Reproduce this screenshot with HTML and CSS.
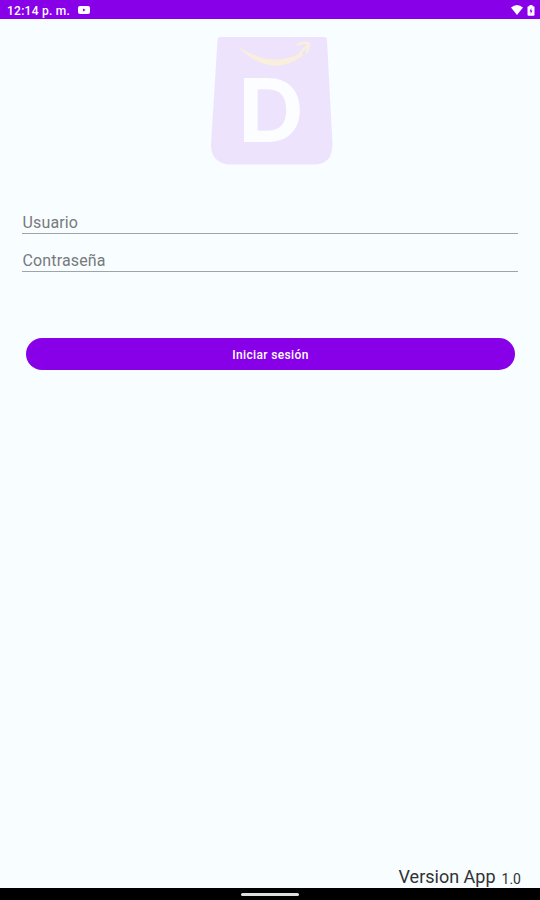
FILE: index.html
```html
<!DOCTYPE html>
<html lang="es">
	<head>
		<meta charset="utf-8">
		<title>Iniciar sesión</title>
		<link rel="stylesheet" href="styles.css">
	</head>
	<body>

		<div class="status-bar">
			<span class="time">12:14 p. m.</span>
			<svg class="video" width="12" height="8" viewBox="0 0 12 8">
				<rect width="12" height="8" rx="2" fill="#fff"/>
				<path d="M5 2.500v3l2.700-1.500z" fill="#8800e8"/>
			</svg>
			<svg class="wifi" width="12" height="10" viewBox="0 0 12 10">
				<path d="M0 2.6Q6-2.4 12 2.6L6 10z" fill="#fff"/>
			</svg>
			<svg class="battery" width="8" height="11" viewBox="0 0 8 11">
				<path d="M2.5 0h3v1.2h1Q7.5 1.2 7.5 2.2v7.6q0 1-1 1h-5q-1 0-1-1V2.2q0-1 1-1h1z" fill="#fff"/>
				<path d="M4.3 3L2.6 6.5h1.1V9l1.7-3.4H4.3z" fill="#8800e8"/>
			</svg>
		</div>

		<form class="login">
			<svg class="logo" width="124" height="130" viewBox="0 0 124 130">
				<path d="M10 1H114Q117 1 117 4L122.5 109Q122 128 105 128.500H18Q1 126 1 109L7.500 4Q7.500 1 10 1z" fill="#ede3fd"/>
				<path d="M30 12.500Q64 33 91 17L92.500 19.500Q62 42 30 12.500z" fill="#f9efdc" stroke="#f9efdc"/>
				<path d="M87 9Q94 5.500 99 7.500Q99.500 12 96 17M98 8.500L90 17.500" fill="none" stroke="#f9efdc" stroke-width="2.400"/>
				<text class="letter" x="28" y="105.500" textLength="66" lengthAdjust="spacingAndGlyphs">D</text>
			</svg>

			<input class="field" type="text" placeholder="Usuario">
			<input class="field" type="password" placeholder="Contraseña">

			<button class="btn" type="button">Iniciar sesión</button>
		</form>

		<div class="version">
			<span>Version App</span>
			<span class="number">1.0</span>
		</div>

		<div class="nav-bar"><span></span></div>

	</body>
</html>
```
FILE: styles.css
```css
* {margin:0; padding: 0; box-sizing: border-box;}

body {
	display: flex;
	flex-direction: column;
	height: 900px;
	overflow: hidden;
	background-color: #f8fdff;
	font-family: Roboto, "Liberation Sans", sans-serif;
}

.status-bar {
	display: flex;
	align-items: center;
	height: 19px;
	padding: 1px 5px 0 7px;
	background-color: #8800e8;
	color: #fff;
}

.status-bar .time {
	padding-top: 1px;
	font-size: 12px;
	font-weight: 500;
	letter-spacing: 0.25px;
	white-space: nowrap;
}

.status-bar .video {
	margin-left: 8px;
}

.status-bar .wifi {
	margin-left: auto;
}

.status-bar .battery {
	margin-left: 4px;
}

.login {
	display: flex;
	flex-direction: column;
	flex: 1;
	padding: 17px 22px 0;
}

.logo {
	display: block;
	margin-left: 188px;
	margin-bottom: 40px;
}

.logo .letter {
	font-family: Inter, "Open Sans", sans-serif;
	font-size: 88px;
	font-weight: 700;
	fill: #fbfdff;
}

.field {
	width: 100%;
	height: 28px;
	margin-bottom: 10px;
	padding: 5px 0 0 0.5px;
	border: none;
	border-bottom: 1px solid #a0a4a5;
	background: none;
	font-family: inherit;
	font-size: 16px;
	letter-spacing: 0.15px;
	outline: none;
}

.field::placeholder {
	color: #777a7c;
}

.btn {
	height: 32px;
	margin: 56px 3px 0 4px;
	padding-top: 2px;
	border: none;
	border-radius: 16px;
	background-color: #8800e8;
	color: #fff;
	font-family: inherit;
	font-size: 12px;
	font-weight: 500;
	letter-spacing: 0.35px;
}

.version {
	display: flex;
	justify-content: flex-end;
	align-items: baseline;
	padding-right: 19px;
	color: #303233;
	font-size: 18px;
	line-height: 20px;
}

.version .number {
	position: relative;
	top: 1px;
	margin-left: 6px;
	font-size: 14px;
}

.nav-bar {
	display: flex;
	justify-content: center;
	height: 12px;
	padding-top: 5px;
	background-color: #000;
}

.nav-bar span {
	width: 58px;
	height: 3px;
	border-radius: 2px;
	background-color: #dde0e0;
}
```
